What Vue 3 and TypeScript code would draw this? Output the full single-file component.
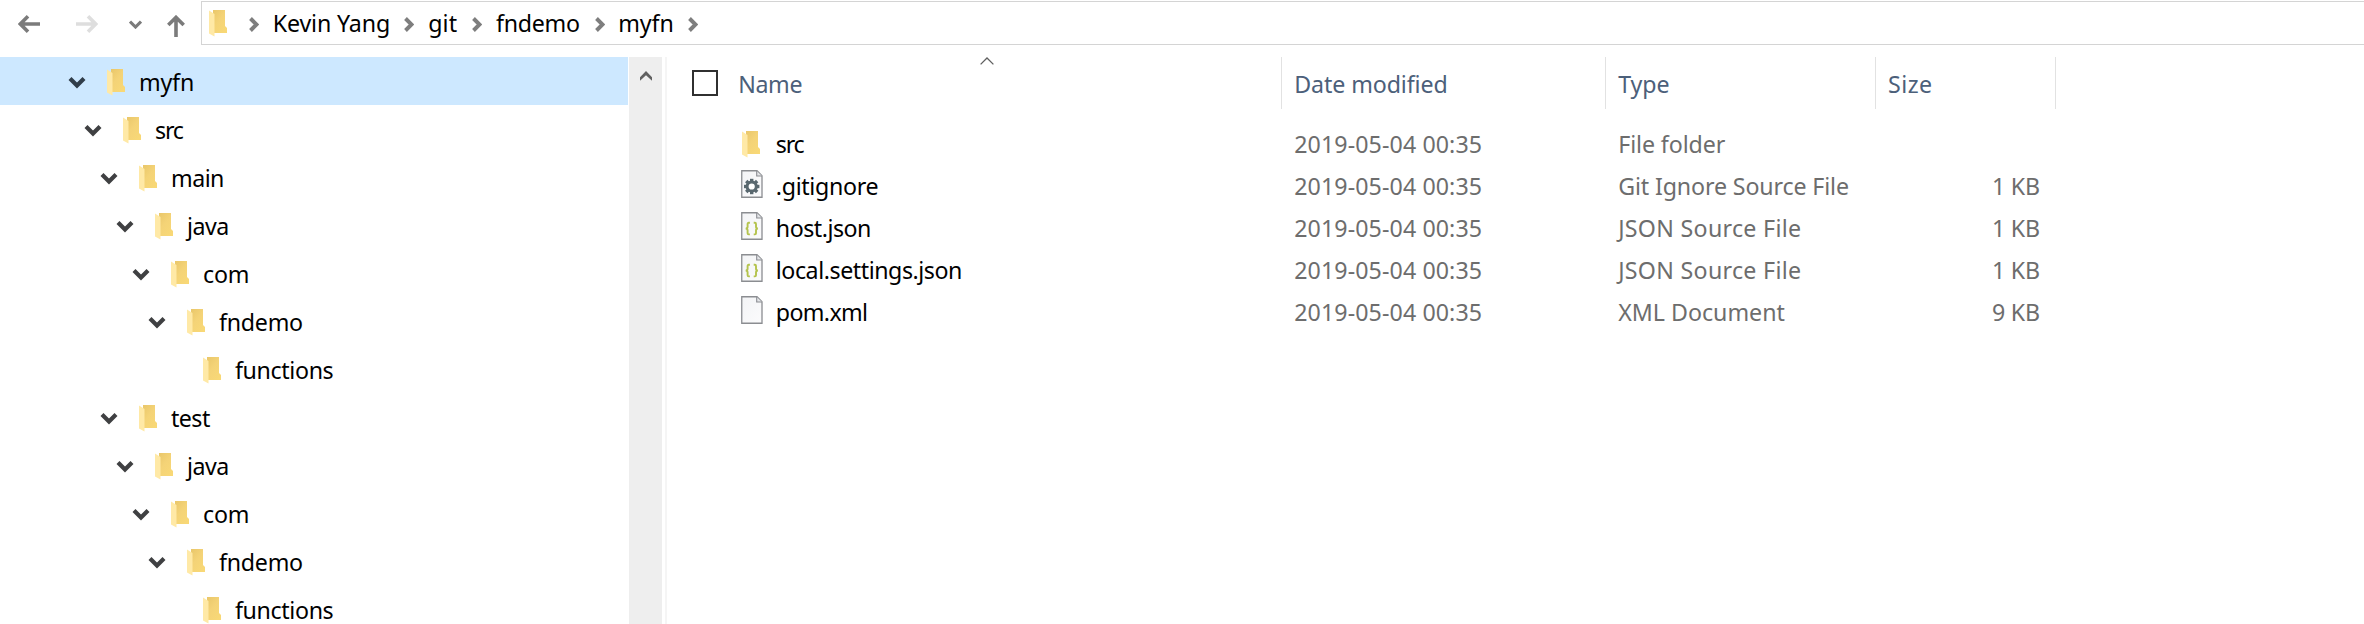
<script setup lang="ts">
interface Label { text: string; width: number }
interface TreeNode extends Label { level: number; leaf?: boolean; selected?: boolean }
type IconKind = 'folder' | 'gear' | 'json' | 'blank'
interface FileRow { icon: IconKind; name: Label; type: Label; size?: string }

const crumbs: Label[] = [
  { text: 'Kevin Yang', width: 116.2 },
  { text: 'git', width: 28.5 },
  { text: 'fndemo', width: 83 },
  { text: 'myfn', width: 54.3 },
]

const tree: TreeNode[] = [
  { text: 'myfn', width: 53.9, level: 0, selected: true },
  { text: 'src', width: 28.8, level: 1 },
  { text: 'main', width: 52.1, level: 2 },
  { text: 'java', width: 41.2, level: 3 },
  { text: 'com', width: 44.8, level: 4 },
  { text: 'fndemo', width: 83.1, level: 5 },
  { text: 'functions', width: 98.6, level: 6, leaf: true },
  { text: 'test', width: 38.9, level: 2 },
  { text: 'java', width: 41.2, level: 3 },
  { text: 'com', width: 44.8, level: 4 },
  { text: 'fndemo', width: 83.1, level: 5 },
  { text: 'functions', width: 98.6, level: 6, leaf: true },
]

const jsonType: Label = { text: 'JSON Source File', width: 181.8 }
const files: FileRow[] = [
  { icon: 'folder', name: { text: 'src', width: 28.8 }, type: { text: 'File folder', width: 107.5 } },
  { icon: 'gear', name: { text: '.gitignore', width: 101.7 }, type: { text: 'Git Ignore Source File', width: 229.8 }, size: '1 KB' },
  { icon: 'json', name: { text: 'host.json', width: 94.3 }, type: jsonType, size: '1 KB' },
  { icon: 'json', name: { text: 'local.settings.json', width: 185.3 }, type: jsonType, size: '1 KB' },
  { icon: 'blank', name: { text: 'pom.xml', width: 91.3 }, type: { text: 'XML Document', width: 166.3 }, size: '9 KB' },
]

const teeth = [0, 45, 90, 135, 180, 225, 270, 315]

// Tracks a label so that its last glyph ends at the given width.
const ctx = document.createElement('canvas').getContext('2d')!
ctx.font = '23.2px "Noto Sans"'
function fit(text: string, width: number) {
  const right = ctx.measureText(text).actualBoundingBoxRight
  return { width: `${width}px`, letterSpacing: `${((width - right) / (text.length - 1)).toFixed(3)}px` }
}
</script>

<template>
  <svg class="defs" width="0" height="0" aria-hidden="true">
    <defs>
      <linearGradient id="folderBack" x1="0" y1="0" x2="1" y2="1">
        <stop offset="0" stop-color="#e6c366" /><stop offset=".5" stop-color="#f4d377" /><stop offset="1" stop-color="#f9d976" />
      </linearGradient>
      <linearGradient id="paper" x1="0" y1="0" x2="1" y2="1">
        <stop offset="0" stop-color="#f3f4f6" /><stop offset="1" stop-color="#fbfbfc" />
      </linearGradient>
      <symbol id="folder" viewBox="0 0 20 27">
        <path d="M1 0H17V16L19 18V23H5V0Z" fill="url(#folderBack)" />
        <path d="M1 0.5L6.5 4V26.6L1 23.5Z" fill="#ffe9a6" />
      </symbol>
      <symbol id="page" viewBox="0 0 22 28">
        <path d="M.75 .75H16L21 5.7V27.25H.75Z" fill="url(#paper)" stroke="#8b8d91" stroke-width="1.3" />
        <path d="M15.7 1V6H21" fill="#e3e5e8" stroke="#8b8d91" stroke-width="1.1" />
      </symbol>
    </defs>
  </svg>

  <div class="window">
    <header class="toolbar">
      <nav class="nav">
        <svg class="back" viewBox="0 0 22 18"><path d="M22 9H2M10 1.3L2.4 9L10 16.7" /></svg>
        <svg class="forward" viewBox="0 0 22 18"><path d="M0 9H20M12 1.3L19.6 9L12 16.7" /></svg>
        <svg class="recent" viewBox="0 0 13 9"><path d="M1 1.5L6.5 7L12 1.5" /></svg>
        <svg class="up" viewBox="0 0 18 22"><path d="M9 22V2M1.3 10L9 2.4L16.7 10" /></svg>
      </nav>
      <div class="address">
        <svg class="icon-folder"><use href="#folder" /></svg>
        <svg class="sep first" viewBox="0 0 10 15"><path d="M1.5 1.5L7.5 7.5L1.5 13.5" /></svg>
        <template v-for="c in crumbs" :key="c.text">
          <span class="label" :style="fit(c.text, c.width)">{{ c.text }}</span>
          <svg class="sep" viewBox="0 0 10 15"><path d="M1.5 1.5L7.5 7.5L1.5 13.5" /></svg>
        </template>
      </div>
    </header>

    <div class="body">
      <aside class="tree">
        <div
          v-for="(n, i) in tree" :key="i" class="node" :class="{ selected: n.selected }"
          :style="{ paddingLeft: `${68 + n.level * 16}px` }"
        >
          <svg class="toggle" viewBox="0 0 18 13"><path v-if="!n.leaf" d="M2 2.5L9 9.5L16 2.5" /></svg>
          <svg class="icon-folder"><use href="#folder" /></svg>
          <span class="label" :style="fit(n.text, n.width)">{{ n.text }}</span>
        </div>
      </aside>
      <div class="scrollbar">
        <svg viewBox="0 0 12 10"><path d="M0 6.3L6 0L12 6.3V9.8L6 4.2L0 9.8Z" /></svg>
      </div>
      <div class="splitter"></div>

      <main class="list">
        <div class="row head">
          <div class="cell name">
            <span class="checkbox"></span>
            <span class="label" :style="fit('Name', 63.2)">Name</span>
            <svg class="sort" viewBox="0 0 14 8"><path d="M.6 7.4L7 1L13.4 7.4" /></svg>
          </div>
          <div class="cell date"><span class="label" :style="fit('Date modified', 152.3)">Date modified</span></div>
          <div class="cell type"><span class="label" :style="fit('Type', 50.3)">Type</span></div>
          <div class="cell size"><span class="label" :style="fit('Size', 43)">Size</span></div>
        </div>
        <div class="rows">
          <div v-for="f in files" :key="f.name.text" class="row file">
            <div class="cell name">
              <svg v-if="f.icon === 'folder'" class="icon-folder"><use href="#folder" /></svg>
              <svg v-else class="icon-page" viewBox="0 0 22 28">
                <use href="#page" />
                <g v-if="f.icon === 'gear'" transform="translate(10.7 16.5)">
                  <rect v-for="a in teeth" :key="a" x="-1.7" y="-7.7" width="3.4" height="4" fill="#59686f" :transform="`rotate(${a})`" />
                  <circle r="4.6" fill="#fff" stroke="#59686f" stroke-width="3" />
                </g>
                <g v-if="f.icon === 'json'" fill="none" stroke="#b4c34d" stroke-width="1.9">
                  <path d="M8.9 10.8H7.7Q6.6 10.8 6.6 12V14.8Q6.6 16.5 4.7 16.6Q6.6 16.7 6.6 18.4V21.2Q6.6 22.4 7.7 22.4H8.9" />
                  <path d="M12.7 10.8H13.9Q15 10.8 15 12V14.8Q15 16.5 16.9 16.6Q15 16.7 15 18.4V21.2Q15 22.4 13.9 22.4H12.7" />
                </g>
              </svg>
              <span class="label" :style="fit(f.name.text, f.name.width)">{{ f.name.text }}</span>
            </div>
            <div class="cell date"><span class="label" :style="fit('2019-05-04 00:35', 186.6)">2019-05-04 00:35</span></div>
            <div class="cell type"><span class="label" :style="fit(f.type.text, f.type.width)">{{ f.type.text }}</span></div>
            <div class="cell size"><span v-if="f.size" class="label" :style="fit(f.size, 47)">{{ f.size }}</span></div>
          </div>
        </div>
      </main>
    </div>
  </div>
</template>

<style>
body { margin: 0; background: #fff; overflow: hidden; }
</style>

<style scoped>
.defs { position: absolute; }
.window {
  width: 2364px; height: 624px; overflow: hidden; background: #fff; color: #000;
  font: 23.2px/26px "Noto Sans", "Open Sans", sans-serif;
  display: flex; flex-direction: column;
}
svg { flex: none; display: block; fill: none; }
.label { display: block; flex: none; white-space: pre; }
.icon-folder { width: 20px; height: 27px; }
.icon-page { width: 22px; height: 28px; }

.toolbar { display: flex; height: 57px; flex: none; box-sizing: border-box; padding-top: 1px; align-items: flex-start; }
.nav { width: 201px; flex: none; height: 46px; display: flex; align-items: center; box-sizing: border-box; padding-left: 18px; }
.nav svg { stroke: #7b7b7b; stroke-width: 3.6; }
.nav .back { width: 22px; height: 18px; }
.nav .forward { width: 22px; height: 18px; margin-left: 36px; stroke: #dedede; }
.nav .recent { width: 13px; height: 9px; margin-left: 31px; stroke-width: 3.1; }
.nav .up { width: 18px; height: 22px; margin: 3px 0 0 25px; }
.address {
  flex: 1; height: 44px; box-sizing: border-box; border: 1px solid #d4d4d4; border-right: 0;
  display: flex; align-items: center; padding-left: 6px;
}
.address .icon-folder { margin-top: 1px; }
.sep { width: 10px; height: 15px; margin: 3px 13.7px 0 15.6px; stroke: #7e7e7e; stroke-width: 3.9; }
.sep.first { margin-left: 20.5px; margin-right: 14.2px; }

.body { flex: 1; display: flex; min-height: 0; }
.tree { width: 628px; flex: none; overflow: hidden; }
.node { height: 48px; box-sizing: border-box; display: flex; align-items: center; }
.node.selected { background: #cde8ff; }
.node .toggle { width: 18px; height: 13px; margin-top: 3px; stroke: #3f4042; stroke-width: 4.2; }
.node.selected .toggle { stroke: #303d4a; }
.node .icon-folder { margin: 2px 0 0 20px; }
.node .label { margin: 2px 0 0 13px; }
.scrollbar { margin-left: 1px; width: 33px; flex: none; background: #eee; display: flex; justify-content: center; padding-top: 14px; box-sizing: border-box; }
.scrollbar svg { width: 12px; height: 10px; fill: #606060; }
.splitter { width: 2px; margin-left: 3px; background: #f5f5f5; flex: none; }

.list { flex: 1; min-width: 0; }
.row { display: flex; }
.cell { display: flex; align-items: center; box-sizing: border-box; flex: none; }
.cell.name { width: 615px; }
.cell.date { width: 324px; padding-left: 12.2px; }
.cell.type { width: 270px; padding-left: 12.2px; }
.cell.size { width: 180px; }
.head { height: 52px; color: #4c607a; }
.head .cell { border-right: 1px solid #e2e2e2; position: relative; }
.head .name { padding-left: 25px; }
.head .size { padding-left: 12px; }
.head .label { margin-top: 2px; }
.checkbox { width: 26px; height: 26px; box-sizing: border-box; border: 2px solid #303030; flex: none; }
.checkbox + .label { margin-left: 20.2px; }
.sort { position: absolute; left: 313px; top: 0; width: 14px; height: 8px; stroke: #606060; stroke-width: 1.3; }
.rows { padding-top: 14px; }
.file { height: 42px; color: #6d6d6d; }
.file .name { padding-left: 73.5px; color: #000; }
.file .icon-folder { margin: 0 15.3px 0 0; }
.file .icon-page { margin: -4px 13.3px 0 0; }
.file .size { justify-content: flex-end; padding-right: 17px; }
</style>
